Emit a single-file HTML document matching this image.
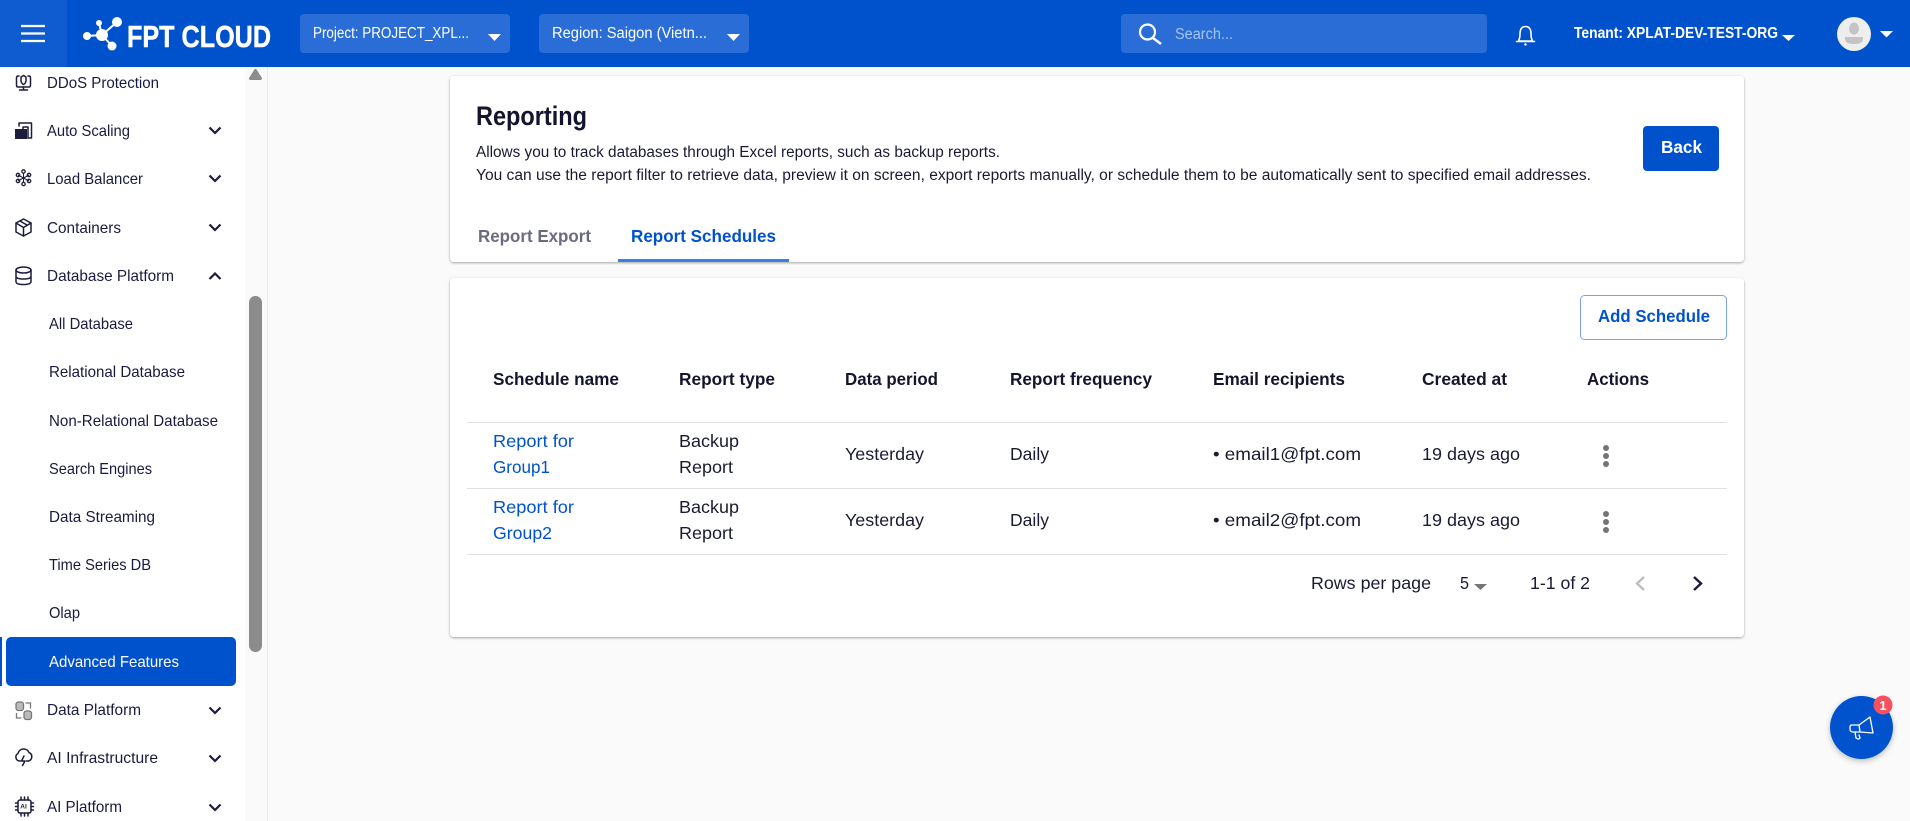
<!DOCTYPE html>
<html lang="en"><head><meta charset="utf-8"><title>Reporting</title>
<style>
html,body{margin:0;padding:0;background:#fafafa;overflow:hidden}
svg{display:block}
text{font-family:"Liberation Sans",sans-serif;white-space:pre}
.n{font-size:16px;fill:#1a1a40}
.t{font-size:17.5px;fill:#1a1a33}
.h{font-size:17.5px;font-weight:bold;fill:#14142e}
.w{fill:#fff;font-size:15.5px}
.ic{fill:none;stroke:#1c1c3c;stroke-width:1.5;stroke-linecap:round;stroke-linejoin:round}
.ch{fill:none;stroke:#1c1c3c;stroke-width:2.2}
</style></head><body>
<svg width="1910" height="821" viewBox="0 0 1910 821" xmlns="http://www.w3.org/2000/svg">
<defs><filter id="s" x="-2%" y="-5%" width="104%" height="110%"><feDropShadow dx="0" dy="1" stdDeviation="1.2" flood-color="#000" flood-opacity=".35"/></filter>
<filter id="f" x="-30%" y="-30%" width="160%" height="160%"><feDropShadow dx="0" dy="2" stdDeviation="3" flood-color="#000" flood-opacity=".25"/></filter></defs>
<rect width="1910" height="821" fill="#fafafa"/>

<!-- sidebar -->
<rect x="0" y="67" width="245" height="754" fill="#fff"/>
<rect x="267" y="67" width="1" height="754" fill="#ececec"/>
<path d="M255.500 70.500 L260.500 78.500 H250.500 Z" fill="#8c8c8c" stroke="#8c8c8c" stroke-width="3" stroke-linejoin="round"/>
<rect x="249" y="296" width="13" height="356" rx="6.500" fill="#8c8c8c"/>
<rect x="0" y="637" width="2" height="49" fill="#0052cc"/>
<rect x="6" y="637" width="230" height="49" rx="5" fill="#0052cc"/>

<text class="n" x="47" y="88" textLength="112" lengthAdjust="spacingAndGlyphs">DDoS Protection</text>
<text class="n" x="47" y="136" textLength="83" lengthAdjust="spacingAndGlyphs">Auto Scaling</text>
<text class="n" x="47" y="184" textLength="96" lengthAdjust="spacingAndGlyphs">Load Balancer</text>
<text class="n" x="47" y="233" textLength="74" lengthAdjust="spacingAndGlyphs">Containers</text>
<text class="n" x="47" y="281" textLength="127" lengthAdjust="spacingAndGlyphs">Database Platform</text>
<text class="n" x="49" y="329" textLength="84" lengthAdjust="spacingAndGlyphs">All Database</text>
<text class="n" x="49" y="377" textLength="136" lengthAdjust="spacingAndGlyphs">Relational Database</text>
<text class="n" x="49" y="426" textLength="169" lengthAdjust="spacingAndGlyphs">Non-Relational Database</text>
<text class="n" x="49" y="474" textLength="103" lengthAdjust="spacingAndGlyphs">Search Engines</text>
<text class="n" x="49" y="522" textLength="106" lengthAdjust="spacingAndGlyphs">Data Streaming</text>
<text class="n" x="49" y="570" textLength="102" lengthAdjust="spacingAndGlyphs">Time Series DB</text>
<text class="n" x="49" y="618" textLength="31" lengthAdjust="spacingAndGlyphs">Olap</text>
<text class="n" x="49" y="667" textLength="130" lengthAdjust="spacingAndGlyphs" style="fill:#fff">Advanced Features</text>
<text class="n" x="47" y="715" textLength="94" lengthAdjust="spacingAndGlyphs">Data Platform</text>
<text class="n" x="47" y="763" textLength="111" lengthAdjust="spacingAndGlyphs">AI Infrastructure</text>
<text class="n" x="47" y="812" textLength="75" lengthAdjust="spacingAndGlyphs">AI Platform</text>

<!-- chevrons -->
<path class="ch" d="M209.500 127.500 L215 133 L220.500 127.500"/>
<path class="ch" d="M209.500 175.500 L215 181 L220.500 175.500"/>
<path class="ch" d="M209.500 224.500 L215 230 L220.500 224.500"/>
<path class="ch" d="M209.500 279 L215 273.500 L220.500 279"/>
<path class="ch" d="M209.500 707.500 L215 713 L220.500 707.500"/>
<path class="ch" d="M209.500 755.500 L215 761 L220.500 755.500"/>
<path class="ch" d="M209.500 804.500 L215 810 L220.500 804.500"/>

<!-- sidebar icons -->
<g class="ic">
<path d="M19 76 H18 Q16.500 76 16.500 78 V85 Q16.500 87 18 87 H29 Q30.500 87 30.500 85 V78 Q30.500 76 29 76 H28"/>
<path d="M23.500 87 V90 M19.500 90 H27.500"/>
<path d="M23.500 75.500 L26 77 V81 Q25.500 83.500 23.500 84.500 Q21.500 83.500 21 81 V77 Z"/>
<path d="M19 126 V123 H31.500 V138 H28"/>
<path d="M23 130 V127 H28 V138"/>
<path d="M23.500 219 L31 223 V232 L23.500 236 L16 232 V223 Z"/>
<path d="M16 223 L23.500 227.500 L31 223 M23.500 227.500 V236 M20 221 L27 225"/>
<ellipse cx="23.500" cy="270" rx="7.500" ry="3"/>
<path d="M16 270 V281.500 Q16 284.500 23.500 284.500 Q31 284.500 31 281.500 V270 M16 276 Q16 279 23.500 279 Q31 279 31 276"/>
<path d="M20.500 761 H19.500 A4 4 0 0 1 18 753.500 A5.800 5.800 0 0 1 29 752.500 A4.500 4.500 0 0 1 28.500 761 H26.500"/>
<path d="M24 756 L21.500 761 H25 L22.500 765.500"/>
<rect x="18" y="800" width="13" height="13" rx="2"/>
<path d="M21 797 V800 M24.500 797 V800 M28 797 V800 M21 813 V816 M24.500 813 V816 M28 813 V816 M15.500 803 H18 M15.500 806.500 H18 M15.500 810 H18 M31 803 H33.500 M31 806.500 H33.500 M31 810 H33.500"/>
</g>
<rect x="15" y="129" width="12" height="10" fill="#1c1c3c"/>
<g fill="none" stroke="#1c1c3c" stroke-width="1.300">
<path d="M23.500 173 V178 M18 175 L23.500 178 L29 175 M18 181 L23.500 178 L29 181 M23.500 178 V182.500" stroke-width="1"/>
<circle cx="23.500" cy="171.500" r="1.700"/><circle cx="18" cy="175" r="1.700"/><circle cx="29" cy="175" r="1.700"/>
<circle cx="18" cy="181" r="1.700"/><circle cx="29" cy="181" r="1.700"/><circle cx="23.500" cy="184" r="1.700"/>
</g>
<g fill="#bbb" stroke="#777" stroke-width="1.300" stroke-linecap="round">
<rect x="16" y="702" width="7.500" height="8.500" rx="2.500"/>
<rect x="24" y="711" width="7.500" height="8.500" rx="2.500"/>
<path d="M26 703 H30.500 V708 M16.500 713.500 V718 H21" fill="none"/>
</g>
<text x="20.300" y="808.500" style="font-size:6.500px;font-weight:bold;fill:#1c1c3c">AI</text>

<!-- header -->
<rect x="0" y="0" width="1910" height="67" fill="#0052cc"/>
<rect x="0" y="0" width="67" height="67" fill="#0f5cd0"/>
<path d="M21 26 H45 M21 33.500 H45 M21 41 H45" stroke="#fff" stroke-width="2.200"/>
<g fill="#fff" stroke="#fff">
<path d="M87 36 L102 35 M99 23 L102 35 M117 22 L102 35 M112 46 L102 35" stroke-width="2" fill="none"/>
<g stroke="none"><circle cx="117" cy="22" r="5"/><circle cx="99" cy="23" r="3"/><circle cx="87" cy="36" r="4"/><circle cx="102" cy="35" r="6"/><circle cx="112" cy="46" r="4.500"/></g>
</g>
<text x="127" y="47" textLength="144" lengthAdjust="spacingAndGlyphs" style="font-size:31px;font-weight:bold;fill:#fff;stroke:#fff;stroke-width:.5">FPT CLOUD</text>

<rect x="300" y="14" width="210" height="39" rx="4" fill="#2a6dd6"/>
<text class="w" x="313" y="38" textLength="156" lengthAdjust="spacingAndGlyphs">Project: PROJECT_XPL...</text>
<path d="M488 34 H501 L494.500 41 Z" fill="#fff"/>
<rect x="539" y="14" width="210" height="39" rx="4" fill="#2a6dd6"/>
<text class="w" x="552" y="38" textLength="155" lengthAdjust="spacingAndGlyphs">Region: Saigon (Vietn...</text>
<path d="M727 34 H740 L733.500 41 Z" fill="#fff"/>

<rect x="1121" y="14" width="366" height="39" rx="4" fill="#2a6dd6"/>
<circle cx="1147.500" cy="32" r="7.500" fill="none" stroke="#fff" stroke-width="2.200"/>
<path d="M1153 38 L1161 44" stroke="#fff" stroke-width="2.400"/>
<text x="1175" y="39" textLength="58" lengthAdjust="spacingAndGlyphs" style="font-size:15.500px;fill:#a5c3ef">Search...</text>
<path d="M1518.500 41 Q1520 38 1520 34 Q1520 26.500 1525.500 26.500 Q1531 26.500 1531 34 Q1531 38 1532.500 41 Z M1516.500 41.500 H1534.500" fill="none" stroke="#fff" stroke-width="1.600" stroke-linejoin="round" stroke-linecap="round"/>
<circle cx="1525.500" cy="44.500" r="1.200" fill="#fff"/>
<text x="1574" y="38" textLength="204" lengthAdjust="spacingAndGlyphs" style="font-size:16px;font-weight:bold;fill:#fff">Tenant: XPLAT-DEV-TEST-ORG</text>
<path d="M1782 35 H1795 L1788.500 41 Z" fill="#fff"/>
<circle cx="1854" cy="34" r="17" fill="#eeeeee"/>
<ellipse cx="1854" cy="28.500" rx="5" ry="6" fill="#c4c4c4"/>
<path d="M1845 37 H1863 V39 Q1863 44 1854 44 Q1845 44 1845 39 Z" fill="#c4c4c4"/>
<path d="M1880 31 H1893 L1886.500 37.500 Z" fill="#fff"/>

<!-- card 1 -->
<rect x="450" y="76" width="1294" height="186" rx="4" fill="#fff" filter="url(#s)"/>
<text x="476" y="125" textLength="111" lengthAdjust="spacingAndGlyphs" style="font-size:27px;font-weight:bold;fill:#14142e">Reporting</text>
<text x="476" y="157" textLength="524" lengthAdjust="spacingAndGlyphs" style="font-size:15.500px;fill:#1a1a33">Allows you to track databases through Excel reports, such as backup reports.</text>
<text x="476" y="180" textLength="1115" lengthAdjust="spacingAndGlyphs" style="font-size:15.500px;fill:#1a1a33">You can use the report filter to retrieve data, preview it on screen, export reports manually, or schedule them to be automatically sent to specified email addresses.</text>
<text x="478" y="242" textLength="113" lengthAdjust="spacingAndGlyphs" style="font-size:17.500px;font-weight:bold;fill:#6b6b80">Report Export</text>
<text x="631" y="242" textLength="145" lengthAdjust="spacingAndGlyphs" style="font-size:17.500px;font-weight:bold;fill:#0052cc">Report Schedules</text>
<rect x="618" y="259" width="171" height="3" fill="#3b7fe6"/>
<rect x="1643" y="126" width="76" height="45" rx="4" fill="#0052cc"/>
<text x="1661" y="153" textLength="41" lengthAdjust="spacingAndGlyphs" style="font-size:17.500px;font-weight:bold;fill:#fff">Back</text>

<!-- card 2 -->
<rect x="450" y="278" width="1294" height="359" rx="4" fill="#fff" filter="url(#s)"/>
<rect x="1580.500" y="295.500" width="146" height="44" rx="4" fill="#fff" stroke="#7ba4e8"/>
<text x="1598" y="322" textLength="112" lengthAdjust="spacingAndGlyphs" style="font-size:17.500px;font-weight:bold;fill:#0052cc">Add Schedule</text>

<text class="h" x="493" y="385" textLength="126" lengthAdjust="spacingAndGlyphs">Schedule name</text>
<text class="h" x="679" y="385" textLength="96" lengthAdjust="spacingAndGlyphs">Report type</text>
<text class="h" x="845" y="385" textLength="93" lengthAdjust="spacingAndGlyphs">Data period</text>
<text class="h" x="1010" y="385" textLength="142" lengthAdjust="spacingAndGlyphs">Report frequency</text>
<text class="h" x="1213" y="385" textLength="132" lengthAdjust="spacingAndGlyphs">Email recipients</text>
<text class="h" x="1422" y="385" textLength="85" lengthAdjust="spacingAndGlyphs">Created at</text>
<text class="h" x="1587" y="385" textLength="62" lengthAdjust="spacingAndGlyphs">Actions</text>

<rect x="467" y="422" width="1260" height="1" fill="#e0e0e0"/>
<rect x="467" y="488" width="1260" height="1" fill="#e0e0e0"/>
<rect x="467" y="554" width="1260" height="1" fill="#e0e0e0"/>

<text class="t" x="493" y="447" textLength="81" lengthAdjust="spacingAndGlyphs" style="fill:#0052cc">Report for</text>
<text class="t" x="493" y="473" textLength="57" lengthAdjust="spacingAndGlyphs" style="fill:#0052cc">Group1</text>
<text class="t" x="679" y="447" textLength="60" lengthAdjust="spacingAndGlyphs">Backup</text>
<text class="t" x="679" y="473" textLength="54" lengthAdjust="spacingAndGlyphs">Report</text>
<text class="t" x="845" y="460" textLength="79" lengthAdjust="spacingAndGlyphs">Yesterday</text>
<text class="t" x="1010" y="460" textLength="39" lengthAdjust="spacingAndGlyphs">Daily</text>
<text class="t" x="1213" y="460" textLength="148" lengthAdjust="spacingAndGlyphs">• email1@fpt.com</text>
<text class="t" x="1422" y="460" textLength="98" lengthAdjust="spacingAndGlyphs">19 days ago</text>
<circle cx="1606" cy="448" r="3" fill="#757575"/><circle cx="1606" cy="456" r="3" fill="#757575"/><circle cx="1606" cy="464" r="3" fill="#757575"/>

<text class="t" x="493" y="513" textLength="81" lengthAdjust="spacingAndGlyphs" style="fill:#0052cc">Report for</text>
<text class="t" x="493" y="539" textLength="59" lengthAdjust="spacingAndGlyphs" style="fill:#0052cc">Group2</text>
<text class="t" x="679" y="513" textLength="60" lengthAdjust="spacingAndGlyphs">Backup</text>
<text class="t" x="679" y="539" textLength="54" lengthAdjust="spacingAndGlyphs">Report</text>
<text class="t" x="845" y="526" textLength="79" lengthAdjust="spacingAndGlyphs">Yesterday</text>
<text class="t" x="1010" y="526" textLength="39" lengthAdjust="spacingAndGlyphs">Daily</text>
<text class="t" x="1213" y="526" textLength="148" lengthAdjust="spacingAndGlyphs">• email2@fpt.com</text>
<text class="t" x="1422" y="526" textLength="98" lengthAdjust="spacingAndGlyphs">19 days ago</text>
<circle cx="1606" cy="514" r="3" fill="#757575"/><circle cx="1606" cy="522" r="3" fill="#757575"/><circle cx="1606" cy="530" r="3" fill="#757575"/>

<text class="t" x="1311" y="589" textLength="120" lengthAdjust="spacingAndGlyphs">Rows per page</text>
<text class="t" x="1460" y="589" textLength="9" lengthAdjust="spacingAndGlyphs">5</text>
<path d="M1474 584 H1487 L1480.500 590 Z" fill="#757575"/>
<text class="t" x="1530" y="589" textLength="60" lengthAdjust="spacingAndGlyphs">1-1 of 2</text>
<path d="M1644 577 L1637 583.500 L1644 590" fill="none" stroke="#bdbdbd" stroke-width="2.400"/>
<path d="M1694 577 L1701 583.500 L1694 590" fill="none" stroke="#1c1c3c" stroke-width="2.400"/>

<!-- fab -->
<circle cx="1861.500" cy="727.500" r="31.500" fill="#0052cc" filter="url(#f)"/>
<g fill="none" stroke="#fff" stroke-width="1.300" stroke-linejoin="round" stroke-linecap="round">
<path d="M1852 725 H1859 L1870 717 L1873 733 L1860 732 H1853 Q1850 732 1850 729 V727 Q1850 725 1852 725 Z"/>
<path d="M1855 732 L1856 738 Q1859 740 1860 738 L1859 735"/>
<path d="M1859 725 L1860 732"/>
</g>
<circle cx="1883" cy="705" r="9.500" fill="#f5505f"/>
<text x="1883" y="710" text-anchor="middle" style="font-size:13px;font-weight:bold;fill:#fff">1</text>
</svg>
</body></html>
